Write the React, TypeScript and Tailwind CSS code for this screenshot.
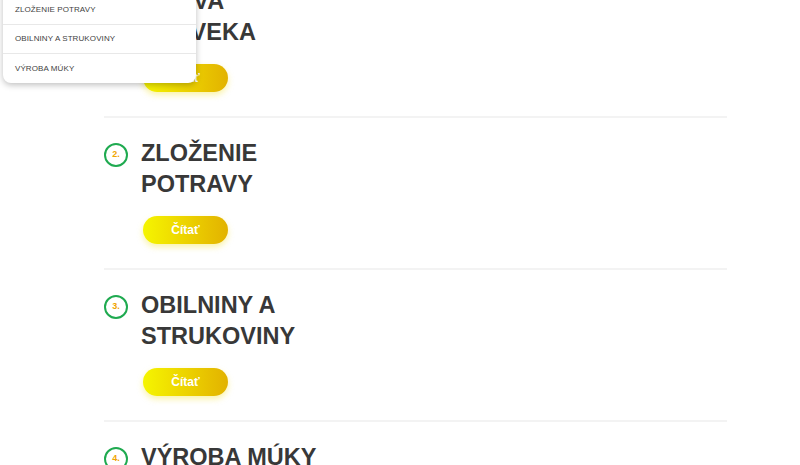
import React from 'react';

const sections = [
  { n: 1, title: 'VÝŽIVA ČLOVEKA' },
  { n: 2, title: 'ZLOŽENIE POTRAVY' },
  { n: 3, title: 'OBILNINY A STRUKOVINY' },
  { n: 4, title: 'VÝROBA MÚKY' },
];

const menuItems = ['VÝŽIVA ČLOVEKA', 'ZLOŽENIE POTRAVY', 'OBILNINY A STRUKOVINY', 'VÝROBA MÚKY'];

export default function App() {
  return (
    <div className="relative h-[465px] w-[800px] overflow-hidden bg-white font-['Liberation_Sans',Arial,sans-serif]">
      <div className="ml-[104px] mt-[-34px] w-[623px]">
        {sections.map((s, i) => (
          <div key={s.n}>
            {i > 0 && <div className="h-[2px] bg-[#f3f3f3]" />}
            <div className="pt-[20px] pb-[24px]">
              <div className="flex gap-[13px]">
                <div className="mt-[5px] flex h-[24px] w-[24px] shrink-0 items-center justify-center rounded-full border-2 border-[#1faa50]">
                  <span className="text-[9px] font-bold text-[#f0a400]">{s.n}.</span>
                </div>
                <div>
                  <h2 className="w-[200px] text-[23.5px] font-bold leading-[31px] text-[#383838]">{s.title}</h2>
                  <button className="ml-[2px] mt-[16px] h-[28px] w-[85px] rounded-full bg-gradient-to-r from-[#f5f500] to-[#e2b200] text-[12px] font-bold text-white shadow-[0_3px_6px_rgba(240,220,0,0.35)]">
                    Čítať
                  </button>
                </div>
              </div>
            </div>
          </div>
        ))}
      </div>

      {/* dropdown */}
      <div className="absolute left-[3px] top-[-33px] w-[193px] rounded-b-[8px] bg-white shadow-[0_2px_6px_rgba(0,0,0,0.25)]">
        {menuItems.map((m, i) => (
          <div
            key={m}
            className={`flex h-[29px] items-center px-[12px] text-[8px] tracking-[0.1px] text-[#3f3f3f] ${i < menuItems.length - 1 ? 'border-b border-[#e8e8e8]' : ''}`}
          >
            {m}
          </div>
        ))}
      </div>
    </div>
  );
}
